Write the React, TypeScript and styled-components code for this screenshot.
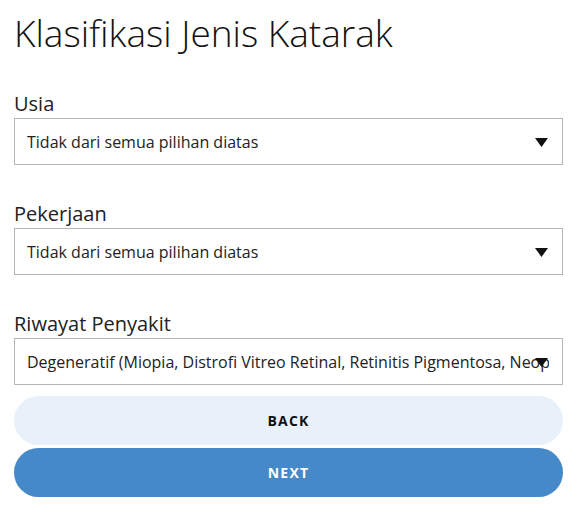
import styled, { createGlobalStyle } from "styled-components";

const GlobalStyle = createGlobalStyle`
  body {
    margin: 0;
    background: #ffffff;
    font-family: "Open Sans", "Liberation Sans", sans-serif;
    color: #1a1a1a;
  }
`;

const Page = styled.div`
  padding: 8px 22px 0 14px;
  display: flex;
  flex-direction: column;
`;

const Title = styled.h1`
  margin: 0 0 33px;
  font-size: 37px;
  font-weight: 300;
  line-height: 50px;
  color: #111;
`;

const Field = styled.div<{ $last?: boolean }>`
  display: flex;
  flex-direction: column;
  margin-bottom: ${(p) => (p.$last ? "11px" : "36px")};
`;

const Label = styled.label`
  font-size: 20px;
  line-height: 26px;
  font-weight: 400;
  color: #222;
  margin-bottom: 1px;
`;

const SelectBox = styled.div`
  position: relative;
  height: 47px;
  box-sizing: border-box;
  border: 1px solid #b5b5b5;
  padding: 0 13px 0 12px;
  display: flex;
  align-items: center;
  overflow: hidden;
`;

const SelectValue = styled.span`
  font-size: 16px;
  color: #222;
  white-space: nowrap;
  overflow: hidden;
`;

const Arrow = styled.svg`
  position: absolute;
  right: 14px;
  top: 19px;
  width: 13px;
  height: 9px;
`;

const Buttons = styled.div`
  display: flex;
  flex-direction: column;
  gap: 3px;
`;

const Button = styled.button<{ $primary?: boolean }>`
  height: 49px;
  border: none;
  border-radius: 25px;
  background: ${(p) => (p.$primary ? "#4589c8" : "#e8f0fa")};
  color: ${(p) => (p.$primary ? "#ffffff" : "#111")};
  font-family: "Open Sans", "Liberation Sans", sans-serif;
  font-size: 14px;
  font-weight: 700;
  letter-spacing: 1.2px;
  cursor: pointer;
`;

const fields = [
  { label: "Usia", value: "Tidak dari semua pilihan diatas" },
  { label: "Pekerjaan", value: "Tidak dari semua pilihan diatas" },
  {
    label: "Riwayat Penyakit",
    value:
      "Degeneratif (Miopia, Distrofi Vitreo Retinal, Retinitis Pigmentosa, Neoplasma)",
  },
];

const App = () => {
  return (
    <>
      <GlobalStyle />
      <Page>
        <Title>Klasifikasi Jenis Katarak</Title>
        {fields.map((f, i) => (
          <Field key={f.label} $last={i === fields.length - 1}>
            <Label>{f.label}</Label>
            <SelectBox>
              <SelectValue>{f.value}</SelectValue>
              <Arrow viewBox="0 0 13 9">
                <polygon points="0,0 13,0 6.5,9" fill="#111" />
              </Arrow>
            </SelectBox>
          </Field>
        ))}
        <Buttons>
          <Button>BACK</Button>
          <Button $primary>NEXT</Button>
        </Buttons>
      </Page>
    </>
  );
};

export default App;
